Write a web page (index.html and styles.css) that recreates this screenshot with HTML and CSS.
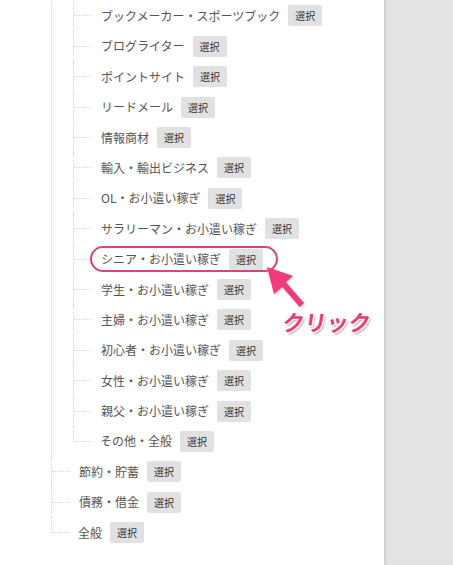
FILE: index.html
```html
<!doctype html>
<html lang="ja">
  <head>
    <meta charset="utf-8">
    <meta name="viewport" content="width=device-width, initial-scale=1">
    <title>カテゴリ選択</title>
    <link rel="stylesheet" href="styles.css">
  </head>
  <body>
    <div class="page">
      <div class="main">
        <ul class="tree">
          <li class="group">
            <ul class="tree sub">
              <li class="row"><span class="stem"></span><span class="item">ブックメーカー・スポーツブック<button class="pick">選択</button></span></li>
              <li class="row"><span class="stem"></span><span class="item">ブログライター<button class="pick">選択</button></span></li>
              <li class="row"><span class="stem"></span><span class="item">ポイントサイト<button class="pick">選択</button></span></li>
              <li class="row"><span class="stem"></span><span class="item">リードメール<button class="pick">選択</button></span></li>
              <li class="row"><span class="stem"></span><span class="item">情報商材<button class="pick">選択</button></span></li>
              <li class="row"><span class="stem"></span><span class="item">輸入・輸出ビジネス<button class="pick">選択</button></span></li>
              <li class="row"><span class="stem"></span><span class="item">OL・お小遣い稼ぎ<button class="pick">選択</button></span></li>
              <li class="row"><span class="stem"></span><span class="item">サラリーマン・お小遣い稼ぎ<button class="pick">選択</button></span></li>
              <li class="row"><span class="stem"></span><span class="item picked">シニア・お小遣い稼ぎ<button class="pick">選択</button></span></li>
              <li class="row"><span class="stem"></span><span class="item">学生・お小遣い稼ぎ<button class="pick">選択</button></span></li>
              <li class="row"><span class="stem"></span><span class="item">主婦・お小遣い稼ぎ<button class="pick">選択</button></span></li>
              <li class="row"><span class="stem"></span><span class="item">初心者・お小遣い稼ぎ<button class="pick">選択</button></span></li>
              <li class="row"><span class="stem"></span><span class="item">女性・お小遣い稼ぎ<button class="pick">選択</button></span></li>
              <li class="row"><span class="stem"></span><span class="item">親父・お小遣い稼ぎ<button class="pick">選択</button></span></li>
              <li class="row"><span class="stem"></span><span class="item">その他・全般<button class="pick">選択</button></span></li>
            </ul>
          </li>
          <li class="row"><span class="stem"></span><span class="item">節約・貯蓄<button class="pick">選択</button></span></li>
          <li class="row"><span class="stem"></span><span class="item">債務・借金<button class="pick">選択</button></span></li>
          <li class="row"><span class="stem"></span><span class="item">全般<button class="pick">選択</button></span></li>
        </ul>

        <!-- annotation -->
        <svg class="arrow" width="60" height="60" viewBox="0 0 60 60">
          <path d="M12 9 L38 18 L31 24 C36.5 31 42.5 37.5 49 45 L44.5 49 C38.5 42 33 35.5 27.5 29 L19 36 Z" fill="#f03a7b"/>
        </svg>
        <div class="callout">クリック</div>
      </div>
      <div class="side"></div>
    </div>
  </body>
</html>
```

FILE: styles.css
```css
/* Reset */
* {
  margin: 0;
  padding: 0;
  box-sizing: border-box;
}

body {
  font-family: "Noto Sans CJK JP", "Noto Sans", sans-serif;
  color: #555;
  background: #fff;
}

.page {
  display: flex;
  height: 565px;
  overflow: hidden;
}

/* Tree area */
.main {
  position: relative;
  flex: 1;
  padding-top: 0.8px;
}

.tree {
  list-style: none;
  margin-left: 51px;
}

.tree.sub {
  margin-left: 21px;
}

.tree li {
  border-left: 1px dotted #d6d6d6;
}

.tree li:last-child {
  border-left: none;
}

.row {
  display: flex;
  align-items: center;
  height: 30.4px;
}

.stem {
  align-self: flex-start;
  width: 19px;
  height: 15.7px;
  border-bottom: 1px dotted #d6d6d6;
}

.tree > .row > .stem {
  width: 18px;
}

.row:last-child > .stem {
  border-left: 1px dotted #d6d6d6;
}

.item {
  display: flex;
  align-items: center;
  padding-left: 7px;
  font-size: 12px;
  line-height: 26px;
  white-space: nowrap;
}

.tree > .row > .item {
  padding-left: 9px;
}

.item.picked {
  margin-left: -2px;
  height: 26px;
  padding-right: 13px;
  border: 2px solid #d9457b;
  border-radius: 14px;
}

/* Select button */
.pick {
  margin-left: 8px;
  height: 21px;
  padding: 0 7px;
  border: none;
  border-radius: 2px;
  background-color: #e1e1e1;
  color: #333;
  font-family: inherit;
  font-size: 10px;
  line-height: 21px;
  cursor: pointer;
}

/* Annotation */
.arrow {
  position: absolute;
  left: 255px;
  top: 258px;
  filter: drop-shadow(1px 1px 1px rgba(0, 0, 0, 0.2));
}

.callout {
  position: absolute;
  left: 283px;
  top: 310px;
  font-size: 22px;
  line-height: 22px;
  font-weight: bold;
  color: #ea3b7b;
  transform: skewX(-8deg);
  text-shadow:
    -1px -1px 0 #fff, 1px -1px 0 #fff, -1px 1px 0 #fff, 1px 1px 0 #fff,
    2px 2px 2px rgba(0, 0, 0, 0.35);
}

/* Right panel */
.side {
  width: 69px;
  background-color: #e3e3e3;
  border-left: 1px solid #cfcfcf;
  box-shadow: inset 2px 0 2px rgba(0, 0, 0, 0.04);
}
```
